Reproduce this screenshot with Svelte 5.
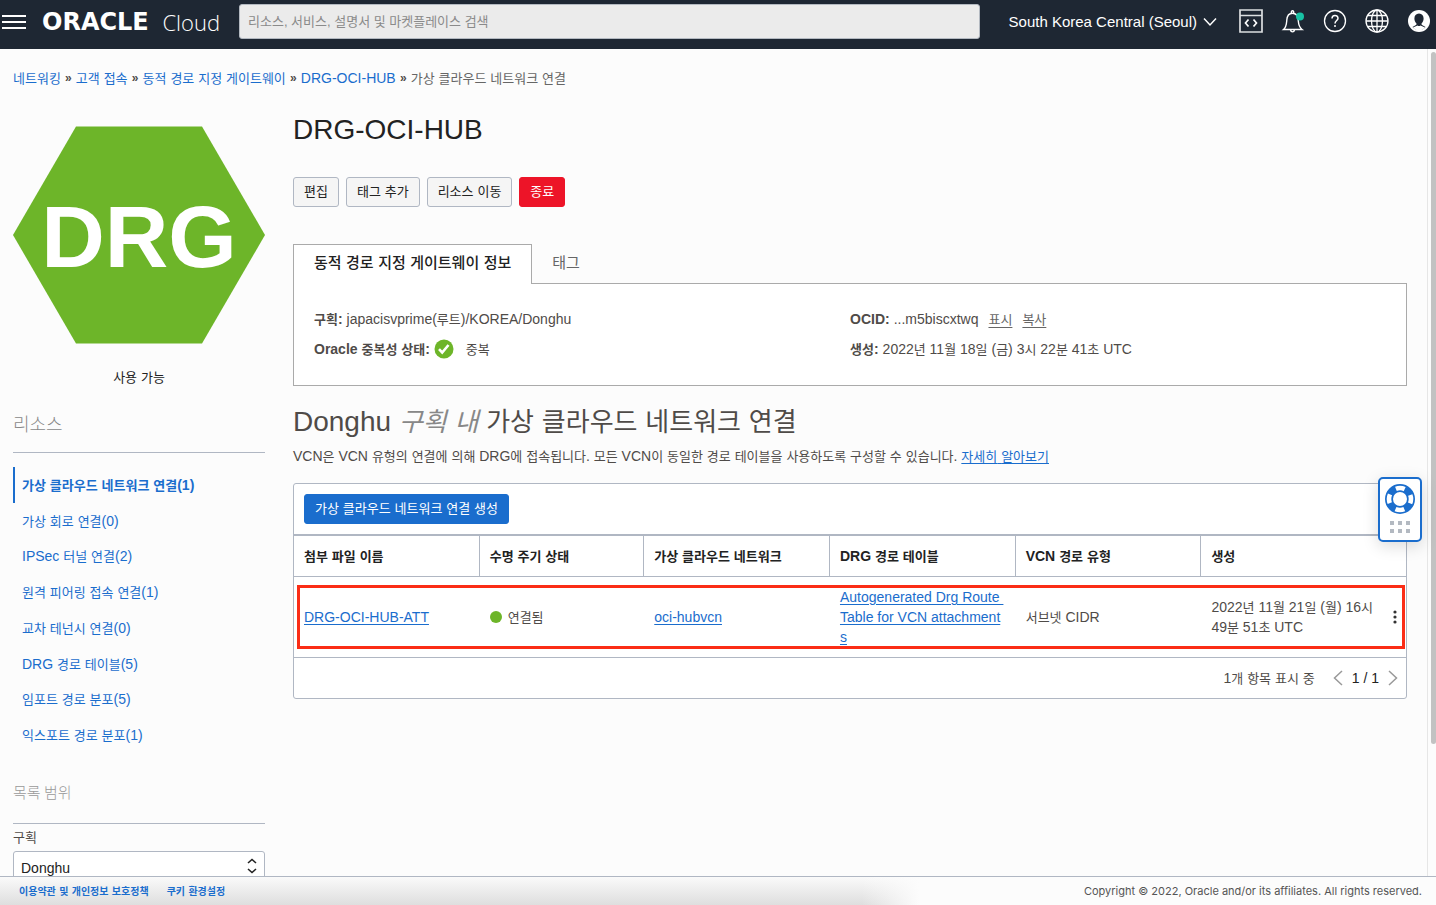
<script>
  const crumbs = ['네트워킹', '고객 접속', '동적 경로 지정 게이트웨이', 'DRG-OCI-HUB'];
  const resources = [
    '가상 클라우드 네트워크 연결(1)',
    '가상 회로 연결(0)',
    'IPSec 터널 연결(2)',
    '원격 피어링 접속 연결(1)',
    '교차 테넌시 연결(0)',
    'DRG 경로 테이블(5)',
    '임포트 경로 분포(5)',
    '익스포트 경로 분포(1)'
  ];
  const columns = ['첨부 파일 이름', '수명 주기 상태', '가상 클라우드 네트워크', 'DRG 경로 테이블', 'VCN 경로 유형', '생성'];
  const routeTable = 'Autogenerated Drg Route \nTable for VCN attachment\ns';
  let query = $state('');
</script>

<!-- Hangul is set one step smaller than the Latin letters and digits beside it -->
{#snippet mix(text)}{#each text.split(/([가-힣]+)/) as part, i}{#if i % 2}<span class="k">{part}</span>{:else}{part}{/if}{/each}{/snippet}

<div class="app">
  <header>
    <button class="bare menu" aria-label="메뉴">
      <svg width="24" height="16" viewBox="0 0 24 16"><path d="M0 2h24M0 8h24M0 14h24" stroke="#fff" stroke-width="2" /></svg>
    </button>
    <a class="logo" href="#home"><span class="oracle">ORACLE</span><span class="cloud">Cloud</span></a>
    <input class="search" type="search" aria-label="검색" placeholder="리소스, 서비스, 설명서 및 마켓플레이스 검색" bind:value={query} />
    <button class="bare region">
      South Korea Central (Seoul)
      <svg width="14" height="10" viewBox="0 0 14 10"><path d="M1 1.500l6 6.500 6-6.500" fill="none" stroke="#fff" stroke-width="1.500" /></svg>
    </button>
    <nav class="tools" aria-label="도구">
      <button class="bare" aria-label="개발자 도구">
        <svg width="24" height="24" viewBox="0 0 24 24" fill="none" stroke="#dcdfe1" stroke-width="1.700"><path d="M1 1h22v22H1zM1 6.500h22" /><path d="M9.500 10.500L6.500 14l3 3.500M14.500 10.500l3 3.500-3 3.500" stroke="#fff" /></svg>
      </button>
      <button class="bare" aria-label="알림">
        <svg width="24" height="24" viewBox="0 0 24 24" fill="none" stroke="#fff" stroke-width="1.400"><path d="M2.500 20.500c3-2.500 3-6 3.300-9.500C6.100 7 8 4.200 11.500 4.200S16.900 7 17.200 11c.3 3.500.3 7 3.800 9.500zM9.500 21c.5 2.500 3.500 2.500 4 0M10.300 4c-.5-3 3-3 2.400 0" /><circle cx="19" cy="7.500" r="4" fill="#18c2a4" stroke="none" /></svg>
      </button>
      <button class="bare" aria-label="도움말">
        <svg width="24" height="24" viewBox="0 0 24 24" fill="none" stroke="#fff" stroke-width="1.300"><circle cx="12" cy="12" r="10.500" /><path d="M9 9.500c0-4 6-4 6-.3 0 2.300-3 2.300-3 5.300" stroke-width="1.500" /><circle cx="12" cy="17" r="1" fill="#fff" stroke="none" /></svg>
      </button>
      <button class="bare" aria-label="언어">
        <svg width="24" height="24" viewBox="0 0 24 24" fill="none" stroke="#fff" stroke-width="1.300"><circle cx="12" cy="12" r="11" /><ellipse cx="12" cy="12" rx="5.500" ry="11" /><path d="M12 1v22M1 12h22M3 6.500h18M3 17.500h18" /></svg>
      </button>
      <button class="bare" aria-label="프로필">
        <svg width="24" height="24" viewBox="0 0 24 24"><circle cx="12" cy="12" r="11" fill="#fff" /><path d="M12 4.500c-3 0-4.600 2.200-4.600 5 0 2 .8 3.800 2 4.800v1.500L5.500 18c1.500 2 4 3 6.500 3s5-1 6.500-3l-3.900-2.200v-1.500c1.200-1 2-2.800 2-4.800 0-2.800-1.600-5-4.600-5z" fill="#1e2733" /><path d="M6 18.500l4.500-2c1 .7 2 .7 3 0l4.500 2c-3 3.800-9 3.800-12 0z" fill="#fff" /></svg>
      </button>
    </nav>
  </header>

  <div class="viewport">
    <div class="page">
      <nav class="crumbs" aria-label="탐색 경로">
        {#each crumbs as c, i}<a href="#c{i}">{@render mix(c)}</a><b>»</b>{/each}<span class="here">{@render mix('가상 클라우드 네트워크 연결')}</span>
      </nav>
      <div class="cols">
        <aside>
          <svg class="hex" viewBox="0 0 252 218" role="img" aria-label="DRG">
            <path d="M63 .5h126L252 109l-63 108.500H63L0 109z" fill="#6db529" />
            <text x="126" y="141" text-anchor="middle">DRG</text>
          </svg>
          <p class="state">{@render mix('사용 가능')}</p>
          <h3 class="res">리소스</h3>
          <ul>
            {#each resources as r, i}<li class:active={i === 0}><a href="#r{i}">{@render mix(r)}</a></li>{/each}
          </ul>
          <h3 class="scope">목록 범위</h3>
          <label for="compartment">구획</label>
          <div class="select">
            <select id="compartment"><option>Donghu</option></select>
            <svg width="10" height="16" viewBox="0 0 10 16" fill="none" stroke="#222" stroke-width="1.600"><path d="M1 5l4-3.500L9 5M1 11l4 3.500L9 11" /></svg>
          </div>
        </aside>

        <main>
          <h1>DRG-OCI-HUB</h1>
          <div class="actions">
            <button class="btn">{@render mix('편집')}</button>
            <button class="btn">{@render mix('태그 추가')}</button>
            <button class="btn">{@render mix('리소스 이동')}</button>
            <button class="btn danger">{@render mix('종료')}</button>
          </div>

          <div class="tabs" role="tablist">
            <button role="tab" aria-selected="true" class="on">{@render mix('동적 경로 지정 게이트웨이 정보')}</button>
            <button role="tab" aria-selected="false">{@render mix('태그')}</button>
          </div>
          <section class="info">
            <div>
              <p><b>{@render mix('구획:')}</b><span>{@render mix('japacisvprime(루트)/KOREA/Donghu')}</span></p>
              <p class="status"><b>{@render mix('Oracle 중복성 상태:')}</b>
                <svg width="20" height="20" viewBox="0 0 20 20"><circle cx="10" cy="10" r="9.500" fill="#6db529" /><path d="M5 10.200l3.200 3.300L14.500 6" fill="none" stroke="#fff" stroke-width="2.600" /></svg>
                <span>{@render mix('중복')}</span></p>
            </div>
            <div>
              <p><b>OCID:</b><span>...m5biscxtwq</span><a href="#show">{@render mix('표시')}</a><a href="#copy">{@render mix('복사')}</a></p>
              <p><b>{@render mix('생성:')}</b><span>{@render mix('2022년 11월 18일 (금) 3시 22분 41초 UTC')}</span></p>
            </div>
          </section>

          <h2>Donghu <i>{@render mix('구획 내')}</i> {@render mix('가상 클라우드 네트워크 연결')}</h2>
          <p class="desc">{@render mix('VCN은 VCN 유형의 연결에 의해 DRG에 접속됩니다. 모든 VCN이 동일한 경로 테이블을 사용하도록 구성할 수 있습니다.')} <a href="#more">{@render mix('자세히 알아보기')}</a></p>

          <section class="list">
            <div class="bar"><button class="btn primary">{@render mix('가상 클라우드 네트워크 연결 생성')}</button></div>
            <table>
              <thead><tr>{#each columns as c}<th>{@render mix(c)}</th>{/each}</tr></thead>
              <tbody>
                <tr>
                  <td><a href="#att">DRG-OCI-HUB-ATT</a></td>
                  <td><span class="dot"></span>{@render mix('연결됨')}</td>
                  <td><a href="#vcn">oci-hubvcn</a></td>
                  <td><a class="route" href="#rt">{routeTable}</a></td>
                  <td>{@render mix('서브넷 CIDR')}</td>
                  <td>
                    <div class="created"><span class="date">{@render mix('2022년 11월 21일 (월) 16시 49분 51초 UTC')}</span>
                      <button class="bare" aria-label="작업"><svg width="4" height="14" viewBox="0 0 4 14" fill="#333"><circle cx="2" cy="2" r="1.600" /><circle cx="2" cy="7" r="1.600" /><circle cx="2" cy="12" r="1.600" /></svg></button>
                    </div>
                  </td>
                </tr>
              </tbody>
            </table>
            <div class="pager">
              <span class="count">{@render mix('1개 항목 표시 중')}</span>
              <button class="bare" aria-label="이전"><svg width="10" height="16" viewBox="0 0 10 16"><path d="M9 1L1.500 8 9 15" fill="none" stroke="#999" stroke-width="1.500" /></svg></button>
              <span>1 / 1</span>
              <button class="bare" aria-label="다음"><svg width="10" height="16" viewBox="0 0 10 16"><path d="M1 1l7.500 7L1 15" fill="none" stroke="#999" stroke-width="1.500" /></svg></button>
            </div>
          </section>
        </main>
      </div>
    </div>
    <div class="track"><div class="thumb"></div></div>
  </div>

  <footer>
    <a href="#terms">{@render mix('이용약관 및 개인정보 보호정책')}</a>
    <a href="#cookies">{@render mix('쿠키 환경설정')}</a>
    <small>Copyright © 2022, Oracle and/or its affiliates. All rights reserved.</small>
  </footer>

  <button class="help" aria-label="지원">
    <svg width="30" height="30" viewBox="0 0 30 30"><circle cx="15" cy="15" r="11" fill="none" stroke="#1a6dcd" stroke-width="8" /><circle cx="15" cy="15" r="11" fill="none" stroke="#fff" stroke-width="4.600" stroke-dasharray="9 8.280" stroke-dashoffset="4.500" /></svg>
    <svg width="20" height="12" viewBox="0 0 20 12" fill="#b3b9c1"><path d="M0 0h4v4H0zM8 0h4v4H8zM16 0h4v4h-4zM0 8h4v4H0zM8 8h4v4H8zM16 8h4v4h-4z" /></svg>
  </button>
</div>

<style>
  :global(body) { background: #fcfcfc; }
  .app {
    position: relative; display: flex; flex-direction: column; height: 100vh; overflow: hidden;
    font: 14px/20px "Liberation Sans", "Noto Sans CJK KR", sans-serif; color: #4f4b48;
  }
  .app :is(h1, h2, h3, p, ul) { margin: 0; padding: 0; font-weight: 400; }
  .app :is(button, input, select) { font-family: inherit; }
  a { color: #1a6dcd; text-decoration: none; }
  .k { font-size: 13px; line-height: 1; }
  .bare { display: flex; align-items: center; padding: 0; border: 0; background: none; color: inherit; }

  header { flex: none; display: flex; align-items: center; height: 49px; padding: 0 5px 6px 2px; box-sizing: border-box; background: #1e2733; color: #fff; }
  .logo { display: flex; align-items: center; justify-content: space-between; width: 178px; margin: 0 19px 0 16px; color: #fff; }
  .oracle { font: bold 24px/30px "DejaVu Sans", sans-serif; }
  .cloud { font: 300 22px/30px "Open Sans", sans-serif; }
  .search { flex: 1; min-width: 0; height: 35px; box-sizing: border-box; padding: 0 8px; border: 1px solid #b3b9c1; border-radius: 3px; background: #ebebeb; font-size: 13px; }
  .search::placeholder { color: #8a8a8a; opacity: 1; }
  .region { gap: 6px; margin: 0 22px 0 29px; font-size: 15px; }
  .tools { display: flex; gap: 18px; padding-bottom: 1px; }

  .viewport { flex: 1; min-height: 0; display: flex; overflow: hidden; }
  .page { flex: 1; min-width: 0; padding: 19px 20px 0 13px; }
  .track { flex: none; width: 8px; border-left: 1px solid #e6e6e6; padding-top: 3px; }
  .thumb { height: 84%; margin-left: 3px; border-radius: 4px; background: #c2c2c2; }
  .crumbs { display: flex; white-space: pre; }
  .crumbs b { width: 15px; text-align: center; font-size: 12px; }
  .here { color: #666; }
  .cols { display: grid; grid-template-columns: 252px minmax(0, 1fr); gap: 28px; }

  aside { padding-top: 38px; }
  .hex { display: block; width: 100%; }
  .hex text { font: bold 88px "Liberation Sans", sans-serif; fill: #fff; }
  .app .state { margin-top: 23px; text-align: center; color: #222; }
  aside h3 { border-bottom: 1px solid #b0b7c3; color: #999; font-family: "Noto Sans CJK KR", sans-serif; }
  .app h3.res { margin-top: 21px; padding-bottom: 14px; font-size: 18px; line-height: 30px; font-weight: 300; color: #888; }
  .app h3.scope { margin-top: 29px; padding-bottom: 21px; font-size: 15px; font-weight: 300; }
  aside ul { display: grid; grid-auto-rows: 1fr; height: 286px; list-style: none; }
  .app aside ul { margin-top: 14px; }
  aside li { display: flex; align-items: center; padding-left: 9px; }
  aside li.active { padding-left: 7px; border-left: 2px solid #1a6dcd; font-weight: 700; }
  label { display: block; margin: 4px 0 3px; font-size: 13px; }
  .select { position: relative; }
  select { appearance: none; width: 100%; height: 34px; padding: 0 7px; border: 1px solid #b0b7c3; border-radius: 3px; background: #fff; font-size: 14px; color: #222; }
  .select svg { position: absolute; right: 8px; top: 7px; }

  main { padding-top: 24px; }
  .app h1 { font-size: 28px; line-height: 36px; color: #222; }
  .actions { display: flex; gap: 7px; margin-top: 29px; }
  .btn { height: 30px; padding: 0 10px 2px; border: 1px solid #b0b7c3; border-radius: 3px; background: #f5f5f5; font-size: 14px; color: #222; }
  .danger { background: #ed1428; border-color: #ed1428; color: #fff; }
  .primary { background: #1a6dcd; border-color: #1a6dcd; color: #fff; }
  .tabs { display: flex; position: relative; z-index: 1; margin-top: 37px; }
  .tabs button { height: 40px; padding: 0 20px 3px; border: 0; background: none; font-size: 16px; color: #666; }
  .tabs .k { font-size: 15px; }
  .tabs .on { border: 1px solid #aaa; border-bottom: 0; background: #fff; color: #222; font-weight: 500; }
  .info { display: grid; grid-template-columns: 1fr 1fr; margin-top: -1px; padding: 20px 0 21px; border: 1px solid #aaa; background: #fff; }
  .info div:first-child { padding-left: 20px; }
  .info p { display: flex; align-items: center; gap: 4px; line-height: 30px; }
  .info a { margin-left: 6px; color: #666; text-decoration: underline; text-underline-offset: 3px; }
  .info .status span:last-child { margin-left: 4px; }
  .info .status b span:last-child { margin-left: 0; }
  .app h2 { margin-top: 16px; font-size: 28px; line-height: 40px; }
  h2 .k { font-size: 26px; }
  h2 i { color: #888; }
  .app .desc { margin-top: 4px; }
  .desc a, td a { text-decoration: underline; text-underline-offset: 2px; }

  .list { margin-top: 17px; border: 1px solid #b0b7c3; border-radius: 3px; background: #fff; }
  .bar { display: flex; padding: 10px; border-bottom: 2px solid #b0b7c3; }
  table { width: 100%; table-layout: fixed; border-collapse: separate; border-spacing: 0; }
  th, td { padding: 0 10px; text-align: left; box-sizing: border-box; border-bottom: 1px solid #b0b7c3; }
  th { height: 41px; border-right: 1px solid #b0b7c3; color: #222; width: 16.700%; }
  th:nth-child(2) { width: 14.800%; }
  th:last-child { width: auto; border-right: 0; }
  td { height: 81px; }
  tbody tr { position: relative; }
  td:last-child::after { content: ""; position: absolute; inset: 8px 1px 9px 3px; border: 3px solid #fb2d16; pointer-events: none; }
  .dot { display: inline-block; width: 12px; height: 12px; margin-right: 6px; border-radius: 50%; background: #6db529; vertical-align: -1px; }
  .route { white-space: pre; }
  .created { display: flex; align-items: center; justify-content: space-between; margin-right: -1px; }
  .date { width: 170px; }
  .pager { display: flex; align-items: center; justify-content: flex-end; gap: 9px; height: 40px; padding-right: 8px; color: #222; }
  .count { margin-right: 9px; color: #4f4b48; }

  footer {
    flex: none; display: flex; align-items: center; gap: 18px; height: 29px; box-sizing: border-box; padding: 0 14px 0 19px;
    border-top: 1px solid #b0b7c3; font-size: 12px; font-weight: 700;
    background: linear-gradient(90deg, transparent 60%, #fcfcfc 64%), linear-gradient(#fafafa, #dedede);
  }
  footer .k { font-size: 10px; }
  footer small { margin-left: auto; font: 11px "Inter", sans-serif; color: #555; }

  .help { position: absolute; right: 14px; top: 477px; display: flex; flex-direction: column; align-items: center; gap: 7px; padding: 5px; border: 2px solid #1a6dcd; border-radius: 5px; background: #fff; box-shadow: 0 4px 16px rgba(0, 0, 0, 0.150); width: 44px; height: 65px; }
</style>
